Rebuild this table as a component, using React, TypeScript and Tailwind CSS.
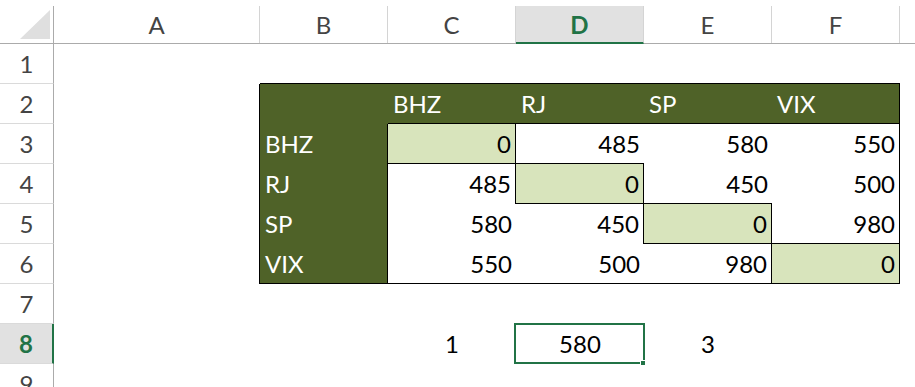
import React from 'react';

const WIDTHS = ['w-[206px]', 'w-[128px]', 'w-[128px]', 'w-[128px]', 'w-[128px]', 'w-[128px]'];
const LETTERS = ['A', 'B', 'C', 'D', 'E', 'F'];

const dark = 'bg-[#4f6228] text-white pl-[5px] text-left';
const num = 'text-right pr-[4px]';
const diag = 'bg-[#d8e4bc]';
const line = 'border-black';

type Cell = { text?: string; cls?: string; selected?: boolean };

// rows 1..9, columns A..F
const rows: Cell[][] = [
  [{}, { cls: `border-b ${line}` }, { cls: `border-b ${line}` }, { cls: `border-b ${line}` }, { cls: `border-b ${line}` }, { cls: `border-b ${line}` }],
  [
    { cls: `border-r ${line}` },
    { cls: dark },
    { text: 'BHZ', cls: `${dark} border-b ${line}` },
    { text: 'RJ', cls: `${dark} border-b ${line}` },
    { text: 'SP', cls: `${dark} border-b ${line}` },
    { text: 'VIX', cls: `${dark} border-b border-r ${line}` },
  ],
  [
    { cls: `border-r ${line}` },
    { text: 'BHZ', cls: `${dark} border-r ${line}` },
    { text: '0', cls: `${num} ${diag} border-r border-b ${line}` },
    { text: '485', cls: `${num} border-b ${line}` },
    { text: '580', cls: num },
    { text: '550', cls: `${num} border-r ${line}` },
  ],
  [
    { cls: `border-r ${line}` },
    { text: 'RJ', cls: `${dark} border-r ${line}` },
    { text: '485', cls: `${num} border-r ${line}` },
    { text: '0', cls: `${num} ${diag} border-r border-b ${line}` },
    { text: '450', cls: `${num} border-b ${line}` },
    { text: '500', cls: `${num} border-r ${line}` },
  ],
  [
    { cls: `border-r ${line}` },
    { text: 'SP', cls: `${dark} border-r ${line}` },
    { text: '580', cls: num },
    { text: '450', cls: `${num} border-r ${line}` },
    { text: '0', cls: `${num} ${diag} border-r border-b ${line}` },
    { text: '980', cls: `${num} border-r border-b ${line}` },
  ],
  [
    { cls: `border-r ${line}` },
    { text: 'VIX', cls: `${dark} border-r border-b ${line}` },
    { text: '550', cls: `${num} border-b ${line}` },
    { text: '500', cls: `${num} border-b ${line}` },
    { text: '980', cls: `${num} border-r border-b ${line}` },
    { text: '0', cls: `${num} ${diag} border-r border-b ${line}` },
  ],
  [{}, {}, {}, {}, {}, {}],
  [{}, {}, { text: '1', cls: 'text-center' }, { text: '580', cls: 'text-center', selected: true }, { text: '3', cls: 'text-center' }, {}],
  [{}, {}, {}, {}, {}, {}],
];

export default function App() {
  return (
    <div
      className="w-[915px] h-[387px] overflow-hidden bg-white text-[24px] text-black"
      style={{ fontFamily: 'Lato, "Noto Sans", sans-serif' }}
    >
      {/* column headers */}
      <div className="flex items-end h-[44px] border-b border-[#ababab]">
        <div className="w-[54px] h-[37px] border-r border-[#ababab] flex items-end justify-end pr-[3px] pb-[4px] shrink-0">
          <svg width="30" height="29" viewBox="0 0 30 29">
            <polygon points="30,0 30,29 0,29" fill="#dfdfdf" />
          </svg>
        </div>
        {LETTERS.map((l, i) =>
          l === 'D' ? (
            <div
              key={l}
              className={`${WIDTHS[i]} h-[38px] -mb-px shrink-0 bg-[#e1e1e1] border-r border-b-2 border-r-[#d4d4d4] border-b-[#217346] text-center leading-[37px] font-bold text-[#217346]`}
            >
              {l}
            </div>
          ) : (
            <div
              key={l}
              className={`${WIDTHS[i]} h-[37px] shrink-0 border-r border-[#d4d4d4] text-center leading-[38px] text-[#444444]`}
            >
              {l}
            </div>
          )
        )}
        <div className="flex-1 h-[37px]" />
      </div>

      {rows.map((row, r) => {
        const n = r + 1;
        const active = n === 8;
        return (
          <div key={n} className="flex h-10">
            <div
              className={`w-[54px] h-10 shrink-0 border-b border-b-[#dadada] text-center leading-[40px] ${
                active
                  ? 'bg-[#e1e1e1] border-r-2 border-r-[#217346] font-bold text-[#217346]'
                  : 'border-r border-r-[#ababab] text-[#444444]'
              }`}
            >
              {n}
            </div>
            {row.map((c, i) => (
              <div
                key={i}
                className={`${WIDTHS[i]} h-10 shrink-0 relative leading-[40px] whitespace-nowrap ${c.cls ?? ''}`}
              >
                {c.text}
                {c.selected && (
                  <>
                    <div className="absolute -left-[2px] -top-px -right-px bottom-0 border-2 border-[#217346]" />
                    <div className="absolute -right-[2px] -bottom-[2px] w-[6px] h-[6px] bg-[#217346] border border-white" />
                  </>
                )}
              </div>
            ))}
            <div className="flex-1" />
          </div>
        );
      })}
    </div>
  );
}
